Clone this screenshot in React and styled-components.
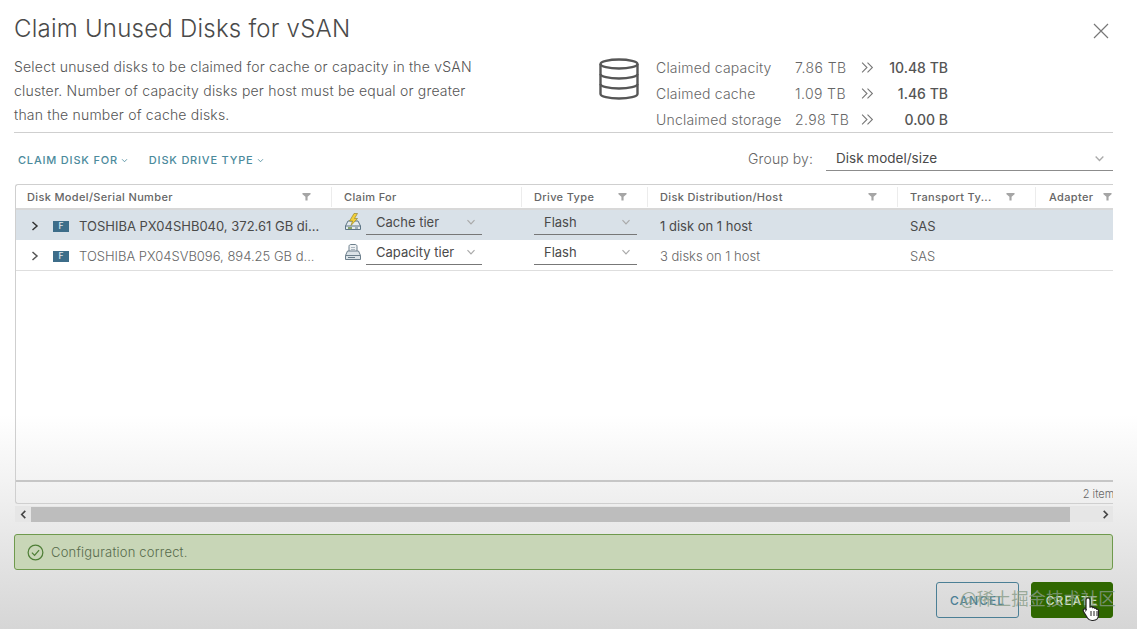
import React from "react";
import styled, { createGlobalStyle } from "styled-components";

const Global = createGlobalStyle`
  html, body { margin: 0; padding: 0; }
  body { font-family: "Inter", "Noto Sans CJK SC", sans-serif; color: #565656; }
  * { box-sizing: border-box; }
`;

const Page = styled.div`
  position: relative;
  width: 1137px;
  height: 629px;
  overflow: hidden;
  padding: 0 24px 0 14px;
  background: linear-gradient(180deg, #fff 0, #fff 415px, #f3f3f3 480px, #e6e6e6 545px, #d6d6d6 629px);
`;

const TitleRow = styled.div`
  display: flex;
  justify-content: space-between;
  align-items: center;
  height: 56px;
`;
const Title = styled.h1`
  margin: 0;
  font-size: 24px;
  font-weight: 300;
  letter-spacing: 0.23px;
  color: #4a4a4a;
`;
const Close = styled.svg`
  width: 16px;
  height: 16px;
  margin: 6px 4px 0 0;
  stroke: #777;
  stroke-width: 1.2;
  fill: none;
`;

const Intro = styled.div`
  display: flex;
  height: 77px;
  border-bottom: 1px solid #cfcfcf;
`;
const Description = styled.p`
  margin: -1px 0 0;
  width: 584px;
  padding-right: 110px;
  font-size: 14px;
  font-weight: 300;
  letter-spacing: 0.2px;
  line-height: 24px;
  color: #555;
`;
const DiskIcon = styled.svg`
  width: 42px;
  height: 44px;
  margin: 1px 16px 0 0;
  flex: none;
  fill: none;
  stroke: #565656;
  stroke-width: 2.4;
`;
const Stats = styled.div`
  display: grid;
  grid-template-columns: 139px 66px 22px 65px;
  grid-auto-rows: 26px;
  margin-top: -2px;
  align-items: center;
  font-size: 14px;
  font-weight: 300;
`;
const StatLabel = styled.span`
  color: #666;
  letter-spacing: 0.2px;
  white-space: nowrap;
`;
const StatValue = styled.span`
  color: #666;
  letter-spacing: 0.4px;
  white-space: nowrap;
`;
const StatArrow = styled.svg`
  width: 13px;
  height: 13px;
  fill: none;
  stroke: #777;
  stroke-width: 1;
`;
const StatTotal = styled.span`
  font-weight: 500;
  color: #555;
  text-align: right;
  white-space: nowrap;
`;

const Toolbar = styled.div`
  display: flex;
  align-items: center;
  height: 51px;
  padding-left: 4px;
`;
const ActionButton = styled.span`
  display: flex;
  align-items: center;
  gap: 3px;
  margin: 3px 21px 0 0;
  font-size: 11px;
  font-weight: 500;
  letter-spacing: 0.8px;
  color: #4b8a9c;
`;
const Chevron = styled.svg`
  width: ${(p) => p.$size || 8}px;
  height: ${(p) => p.$size || 8}px;
  flex: none;
  fill: none;
  stroke: ${(p) => p.$color || "#aaa"};
  stroke-width: ${(p) => p.$weight || 1.2};
`;
const GroupBy = styled.div`
  margin-left: auto;
  display: flex;
  align-items: center;
  gap: 13px;
`;
const GroupLabel = styled.span`
  font-size: 14px;
  font-weight: 300;
  letter-spacing: 0.1px;
  color: #666;
`;
const GroupSelect = styled.div`
  width: 287px;
  height: 24px;
  padding: 0 8px 0 10px;
  display: flex;
  align-items: center;
  justify-content: space-between;
  border-bottom: 1px solid #8c8c8c;
  font-size: 13.5px;
  font-weight: 400;
  color: #4a4a4a;
`;

const Grid = styled.div`
  margin-left: 1px;
  height: 320px;
  border: 1px solid #cfcfcf;
  border-right: none;
  border-radius: 3px 0 0 3px;
  display: flex;
  flex-direction: column;
  overflow: hidden;
`;
const Row = styled.div`
  display: grid;
  grid-template-columns: 316px 190px 126px 250px 138px 77px;
  height: ${(p) => p.$height}px;
  flex: none;
  align-items: center;
  background: ${(p) => p.$bg || "transparent"};
  border-bottom: ${(p) => p.$line};
`;
const BodyRow = styled(Row)`
  align-items: start;
`;
const HeadCell = styled.div`
  height: 20px;
  display: flex;
  align-items: center;
  justify-content: space-between;
  padding: ${(p) => (p.$last ? "0 1px 0 13px" : p.$first ? "0 20px 0 11px" : "0 20px 0 12px")};
  border-right: ${(p) => (p.$last ? "none" : "1px solid #ececec")};
  font-size: 11px;
  font-weight: 500;
  letter-spacing: 0.35px;
  color: #666;
  white-space: nowrap;
  overflow: hidden;
`;
const Funnel = styled.svg`
  width: 9px;
  height: 9px;
  flex: none;
  fill: #a5a5a5;
`;
const NameCell = styled.div`
  display: flex;
  align-items: center;
  height: 30px;
  padding: 2px 0 0 14px;
  min-width: 0;
`;
const DiskName = styled.span`
  font-size: 13px;
  font-weight: ${(p) => (p.$active ? 400 : 300)};
  color: ${(p) => (p.$active ? "#4a4a4a" : "#666")};
  white-space: nowrap;
`;
const Badge = styled.span`
  width: 16px;
  height: 11px;
  margin: 0 10px 0 13px;
  flex: none;
  display: flex;
  align-items: center;
  justify-content: center;
  background: #3d6d89;
  color: #dfe8ee;
  font-size: 8.5px;
  font-weight: 500;
`;
const ClaimCell = styled.div`
  display: flex;
  align-items: flex-start;
  height: 30px;
  padding: 3px 0 0 12px;
`;
const TierIcon = styled.svg`
  width: 18px;
  height: 18px;
  margin: 0 4px 0 0;
  flex: none;
`;
const InlineSelect = styled.div`
  width: ${(p) => p.$width}px;
  height: 22px;
  padding: 0 6px 4px 10px;
  display: flex;
  align-items: center;
  justify-content: space-between;
  border-bottom: 1px solid #777;
  font-size: 13px;
  color: #4a4a4a;
`;
const BodyText = styled.div`
  display: flex;
  align-items: center;
  height: 30px;
  padding: 2px 0 0 12px;
  font-size: 13px;
  font-weight: ${(p) => (p.$active ? 400 : 300)};
  color: ${(p) => (p.$active ? "#4a4a4a" : "#666")};
`;
const GridBody = styled.div`
  flex: 1;
`;
const GridFooter = styled.div`
  height: 23px;
  flex: none;
  border-top: 2px solid #c6c6c6;
  display: flex;
  align-items: center;
  justify-content: flex-end;
  font-size: 11px;
  font-weight: 300;
  color: #666;
  margin-right: -7px;
  padding-top: 2px;
`;
const Scrollbar = styled.div`
  margin: 2px 0 0 1px;
  height: 16px;
  display: flex;
  align-items: center;
  background: #e6e6e6;
`;
const ScrollEnd = styled.div`
  width: 16px;
  height: 16px;
  flex: none;
  display: flex;
  align-items: center;
  justify-content: center;
  margin-left: ${(p) => p.$push || 0};
`;
const ScrollThumb = styled.div`
  width: 1039px;
  height: 15px;
  background: #bdbdbd;
`;
const Alert = styled.div`
  margin-top: 12px;
  height: 36px;
  display: flex;
  align-items: center;
  gap: 7px;
  padding-left: 12px;
  background: #c8d6b7;
  border: 1px solid #6f9a4d;
  border-radius: 3px;
  font-size: 13px;
  font-weight: 300;
  letter-spacing: 0.2px;
  color: #566a4b;
`;
const AlertIcon = styled.svg`
  width: 17px;
  height: 17px;
  flex: none;
  fill: none;
  stroke: #4f7f37;
  stroke-width: 1.3;
`;
const Footer = styled.div`
  margin-top: 12px;
  display: flex;
  justify-content: flex-end;
  gap: 12px;
`;
const Button = styled.div`
  width: ${(p) => p.$width}px;
  height: 36px;
  display: flex;
  align-items: center;
  justify-content: center;
  border-radius: 3px;
  border: 1px solid ${(p) => (p.$primary ? "#2f6700" : "#4b7f95")};
  background: ${(p) => (p.$primary ? "#2f6700" : "transparent")};
  color: ${(p) => (p.$primary ? "#cfe0c3" : "#4b7f95")};
  font-size: 12px;
  font-weight: 500;
  letter-spacing: 1px;
`;
const Watermark = styled.div`
  position: absolute;
  left: 960px;
  top: 587px;
  font-family: "Noto Sans CJK SC", sans-serif;
  font-size: 17.4px;
  line-height: 22px;
  white-space: nowrap;
  color: rgba(135, 155, 135, 0.8);
`;
const Cursor = styled.svg`
  position: absolute;
  left: 1082px;
  top: 596px;
  width: 20px;
  height: 26px;
`;

const ChevronDown = (props) => (
  <Chevron viewBox="0 0 10 10" {...props}>
    <path d="M1.5 3.2 5 6.8l3.5-3.6" />
  </Chevron>
);

const FilterIcon = () => (
  <Funnel viewBox="0 0 10 10">
    <path d="M0.5 1h9v1.4L6.2 5.4V9.5H3.8V5.4L0.5 2.4z" />
  </Funnel>
);

const CacheIcon = () => (
  <TierIcon viewBox="0 0 18 18">
    <path d="M4 8 1.500 13v3.500h15V13L14 8z" fill="#e4eaee" stroke="#5d7585" strokeWidth="1" />
    <path d="M1.500 13h15" stroke="#5d7585" strokeWidth="1" />
    <path d="M10 .5 5.500 8h3L7 12.500 13.500 5.500h-3l3-5z" fill="#f2cf3a" stroke="#8a7a20" strokeWidth=".6" />
    <path d="M4 15h4" stroke="#6a8c3c" strokeWidth="1.300" />
    <path d="M11 15h3" stroke="#5d7585" strokeWidth="1" />
  </TierIcon>
);

const CapacityIcon = () => (
  <TierIcon viewBox="0 0 18 18">
    <path d="M5 8V3.500C5 2 6 1.500 7 1.500h4c1 0 2 .5 2 2V8" fill="#eef1f3" stroke="#6c7f8c" strokeWidth="1" />
    <path d="M7 4.500h4M7 6.500h4" stroke="#9aa8b2" strokeWidth=".8" />
    <path d="M3.500 8 1.500 12.500v4h15v-4L14.500 8z" fill="#dbe3e8" stroke="#6c7f8c" strokeWidth="1" />
    <path d="M1.500 12.500h15M4 14.500h7" stroke="#6c7f8c" strokeWidth="1" />
  </TierIcon>
);

const columns = [
  { label: "Disk Model/Serial Number", filter: true },
  { label: "Claim For", filter: false },
  { label: "Drive Type", filter: true },
  { label: "Disk Distribution/Host", filter: true },
  { label: "Transport Ty...", filter: true },
  { label: "Adapter", filter: true },
];

const stats = [
  ["Claimed capacity", "7.86 TB", "10.48 TB"],
  ["Claimed cache", "1.09 TB", "1.46 TB"],
  ["Unclaimed storage", "2.98 TB", "0.00 B"],
];

const disks = [
  { name: "TOSHIBA PX04SHB040, 372.61 GB di...", tier: "Cache tier", Icon: CacheIcon, hosts: "1 disk on 1 host", active: true },
  { name: "TOSHIBA PX04SVB096, 894.25 GB d...", tier: "Capacity tier", Icon: CapacityIcon, hosts: "3 disks on 1 host", active: false },
];

export default function App() {
  return (
    <Page>
      <Global />
      <TitleRow>
        <Title>Claim Unused Disks for vSAN</Title>
        <Close viewBox="0 0 16 16"><path d="M1 1l14 14M15 1 1 15" /></Close>
      </TitleRow>
      <Intro>
        <Description>
          Select unused disks to be claimed for cache or capacity in the vSAN cluster. Number of capacity disks per host must be equal or greater than the number of cache disks.
        </Description>
        <DiskIcon viewBox="0 0 42 44">
          <ellipse cx="21" cy="7" rx="18.500" ry="4.500" />
          <path d="M2.500 7v30c0 2.500 8.300 4.500 18.500 4.500s18.500-2 18.500-4.500V7" />
          <path d="M2.500 17c0 2.500 8.300 4.500 18.500 4.500s18.500-2 18.500-4.500M2.500 27c0 2.500 8.300 4.500 18.500 4.500s18.500-2 18.500-4.500" />
        </DiskIcon>
        <Stats>
          {stats.map(([label, value, total]) => (
            <React.Fragment key={label}>
              <StatLabel>{label}</StatLabel>
              <StatValue>{value}</StatValue>
              <StatArrow viewBox="0 0 12 12"><path d="M1 1.500 5.500 6 1 10.500M6 1.500 10.500 6 6 10.500" /></StatArrow>
              <StatTotal>{total}</StatTotal>
            </React.Fragment>
          ))}
        </Stats>
      </Intro>
      <Toolbar>
        <ActionButton>CLAIM DISK FOR<ChevronDown $color="#4b8a9c" $size={7} /></ActionButton>
        <ActionButton>DISK DRIVE TYPE<ChevronDown $color="#4b8a9c" $size={7} /></ActionButton>
        <GroupBy>
          <GroupLabel>Group by:</GroupLabel>
          <GroupSelect>Disk model/size<ChevronDown $size={11} /></GroupSelect>
        </GroupBy>
      </Toolbar>
      <Grid>
        <Row $height={25} $line="2px solid #d8d8d8">
          {columns.map((c, i) => (
            <HeadCell key={c.label} $first={i === 0} $last={i === 5}>
              {c.label}
              {c.filter && <FilterIcon />}
            </HeadCell>
          ))}
        </Row>
        {disks.map((d) => (
          <BodyRow key={d.name} $height={d.active ? 30 : 31} $bg={d.active ? "#d9e1e8" : undefined} $line={d.active ? "none" : "1px solid #dedede"}>
            <NameCell>
              <Chevron viewBox="0 0 10 10" $size={10} $color={d.active ? "#333" : "#555"} $weight={1.500}>
                <path d="M2.500 1 7 5 2.500 9" />
              </Chevron>
              <Badge>F</Badge>
              <DiskName $active={d.active}>{d.name}</DiskName>
            </NameCell>
            <ClaimCell>
              <d.Icon />
              <InlineSelect $width={116}>{d.tier}<ChevronDown $size={10} /></InlineSelect>
            </ClaimCell>
            <ClaimCell>
              <InlineSelect $width={103}>Flash<ChevronDown $size={10} /></InlineSelect>
            </ClaimCell>
            <BodyText $active={d.active}>{d.hosts}</BodyText>
            <BodyText $active={d.active}>SAS</BodyText>
            <BodyText />
          </BodyRow>
        ))}
        <GridBody />
        <GridFooter>2 items</GridFooter>
      </Grid>
      <Scrollbar>
        <ScrollEnd>
          <Chevron viewBox="0 0 10 10" $size={9} $color="#444" $weight={1.800}><path d="M7 1 3 5l4 4" /></Chevron>
        </ScrollEnd>
        <ScrollThumb />
        <ScrollEnd $push="auto">
          <Chevron viewBox="0 0 10 10" $size={9} $color="#444" $weight={1.800}><path d="M3 1l4 4-4 4" /></Chevron>
        </ScrollEnd>
      </Scrollbar>
      <Alert>
        <AlertIcon viewBox="0 0 18 18">
          <circle cx="9" cy="9" r="7.800" />
          <path d="M5.200 9.200 8 12l4.800-5.500" />
        </AlertIcon>
        Configuration correct.
      </Alert>
      <Footer>
        <Button $width={83}>CANCEL</Button>
        <Button $width={82} $primary>CREATE</Button>
      </Footer>
      <Watermark>@稀土掘金技术社区</Watermark>
      <Cursor viewBox="0 0 20 26">
        <path d="M6 2c1.200 0 2 .8 2 2v7l1-.2c.8-.2 1.500.2 1.800.8.800-.4 1.700-.1 2 .7.900-.3 1.800.2 2 1 .9-.2 1.700.4 1.700 1.400V19c0 3-2 5.500-5.500 5.500H10c-2 0-3.500-1-4.500-2.500L1.500 15.500c-.6-1-.2-2 .6-2.500.8-.4 1.600-.2 2.200.5L4 14V4c0-1.200.8-2 2-2z" fill="#fff" stroke="#222" strokeWidth="1.200" />
        <path d="M9 15v5M12 15v5M15 15v5" stroke="#222" strokeWidth="1" />
      </Cursor>
    </Page>
  );
}
